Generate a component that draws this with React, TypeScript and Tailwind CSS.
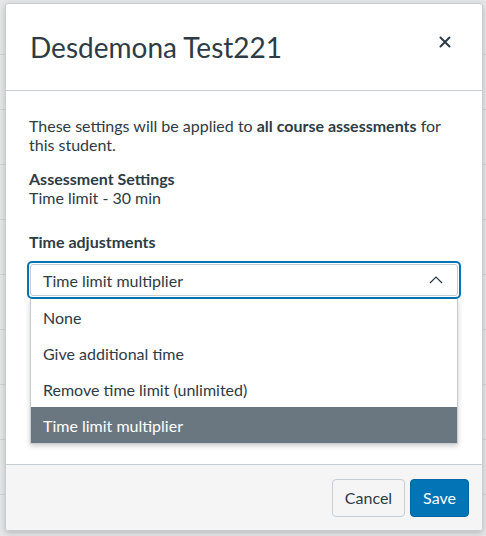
const font = { fontFamily: "Lato, 'Open Sans', sans-serif" };

const options = ["None", "Give additional time", "Remove time limit (unlimited)", "Time limit multiplier"];

export default function App() {
  return (
    <div
      className="h-[536px] w-[486px] overflow-hidden bg-[#e6e7e8] pl-[5px] pt-[3px] text-[#2d3b45] [background-image:repeating-linear-gradient(to_bottom,transparent_0px,transparent_54px,#d3d6d9_54px,#d3d6d9_55px)]"
      style={font}
    >
      <div className="flex h-[528px] w-[478px] flex-col overflow-hidden rounded-[3px] border border-[#c7cdd1] bg-white shadow-[0_2px_6px_rgba(0,0,0,0.2)]">
        {/* header */}
        <div className="flex h-[87px] shrink-0 items-center justify-between border-b border-[#c7cdd1] pl-6 pr-[31px]">
          <h1 className="text-[28px] leading-[35px] font-normal">Desdemona Test221</h1>
          <svg width="12" height="12" viewBox="0 0 12 12" className="mb-[10px]">
            <path d="M1.5 1.5 L10.5 10.5 M10.5 1.5 L1.5 10.5" stroke="#2d3b45" strokeWidth="2" strokeLinecap="round" />
          </svg>
        </div>

        {/* body */}
        <div className="relative h-[373px] shrink-0 pl-[23px] pr-6 pt-[25px] text-[16px] leading-[19px]">
          <p>
            These settings will be applied to <span className="font-bold">all course assessments</span> for this student.
          </p>
          <div className="mt-[15px]">
            <p className="font-bold">Assessment Settings</p>
            <p>Time limit - 30 min</p>
          </div>
          <p className="mt-[25px] font-bold">Time adjustments</p>

          <div className="relative -ml-[2px] -mr-[3px] mt-[10px]">
            <div className="rounded-[5px] border-2 border-[#0374b5] p-px">
              <div className="flex h-[32px] items-center justify-between rounded-[3px] border border-[#c7cdd1] pl-[12px] pr-[14px]">
                <span>Time limit multiplier</span>
                <svg width="14" height="8" viewBox="0 0 14 8">
                  <path d="M1 7 L7 1 L13 7" fill="none" stroke="#2d3b45" strokeWidth="1.2" />
                </svg>
              </div>
            </div>

            <ul className="absolute left-[3px] right-[3px] top-full border border-t-0 border-[#c7cdd1] bg-white shadow-[0_2px_5px_rgba(0,0,0,0.2)]">
              {options.map((o) => (
                <li
                  key={o}
                  className={
                    o === "Time limit multiplier"
                      ? "flex h-[36px] items-center bg-[#6b7780] px-[12px] text-white"
                      : "flex h-[36px] items-center px-[12px]"
                  }
                >
                  {o}
                </li>
              ))}
            </ul>
          </div>
        </div>

        {/* footer */}
        <div className="flex flex-1 items-center justify-end gap-[5px] border-t border-[#c7cdd1] bg-[#f5f5f5] pr-[13px]">
          <button className="h-[38px] w-[73px] rounded-[4px] border border-[#c7cdd1] bg-[#f5f5f5] text-[16px] text-[#2d3b45]">
            Cancel
          </button>
          <button className="h-[38px] w-[59px] rounded-[4px] border border-[#0067a0] bg-[#0374b5] text-[16px] text-white">
            Save
          </button>
        </div>
      </div>
    </div>
  );
}
